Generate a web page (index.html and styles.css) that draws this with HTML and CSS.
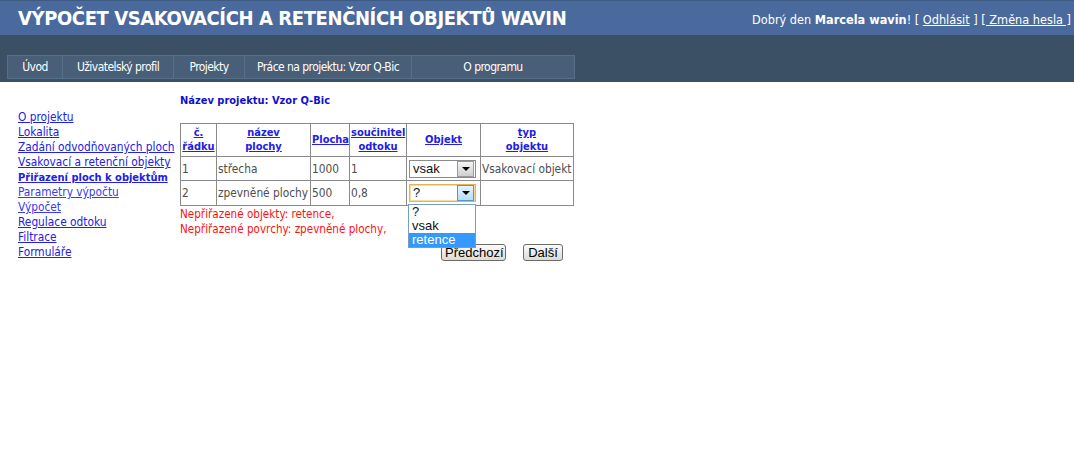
FILE: index.html
```html
<!DOCTYPE html>
<html lang="cs">
<head>
<meta charset="utf-8">
<title>Výpočet vsakovacích a retenčních objektů Wavin</title>
<link rel="stylesheet" href="styles.css">
</head>
<body>
<header class="topbar">
  <h1 class="title">VÝPOČET VSAKOVACÍCH A RETENČNÍCH OBJEKTŮ WAVIN</h1>
  <div class="user">Dobrý den <b>Marcela wavin</b>! [ <a href="#">Odhlásit</a> ] <a href="#">[ Změna hesla ]</a></div>
</header>
<nav class="navbar">
  <ul class="tabs">
    <li class="tab t1">Úvod</li>
    <li class="tab t2">Uživatelský profil</li>
    <li class="tab t3">Projekty</li>
    <li class="tab t4">Práce na projektu: Vzor Q-Bic</li>
    <li class="tab t5">O programu</li>
  </ul>
</nav>
<main class="main">
  <aside class="side">
    <a href="#">O projektu</a>
    <a href="#">Lokalita</a>
    <a href="#">Zadání odvodňovaných ploch</a>
    <a href="#">Vsakovací a retenční objekty</a>
    <a href="#" class="cur">Přiřazení ploch k objektům</a>
    <a href="#" class="vis">Parametry výpočtu</a>
    <a href="#" class="vis">Výpočet</a>
    <a href="#">Regulace odtoku</a>
    <a href="#">Filtrace</a>
    <a href="#">Formuláře</a>
  </aside>
  <section class="content">
    <div class="pname">Název projektu: Vzor Q-Bic</div>
    <table class="grid">
      <colgroup>
        <col class="c1"><col class="c2"><col class="c3"><col class="c4"><col class="c5"><col class="c6">
      </colgroup>
      <tr class="head">
        <th><a href="#">č.<br>řádku</a></th>
        <th><a href="#">název<br>plochy</a></th>
        <th><a href="#">Plocha</a></th>
        <th><a href="#">součinitel<br>odtoku</a></th>
        <th><a href="#">Objekt</a></th>
        <th><a href="#">typ<br>objektu</a></th>
      </tr>
      <tr class="row r1">
        <td>1</td><td>střecha</td><td>1000</td><td>1</td>
        <td class="selcell"><div class="sel"><span class="val">vsak</span><span class="btn"><i class="arr"></i></span></div></td>
        <td>Vsakovací objekt</td>
      </tr>
      <tr class="row r2">
        <td>2</td><td>zpevněné plochy</td><td>500</td><td>0,8</td>
        <td class="selcell"><div class="sel focus"><span class="val">?</span><span class="btn hot"><i class="arr"></i></span>
          <ul class="drop"><li>?</li><li>vsak</li><li class="hl">retence</li></ul></div></td>
        <td></td>
      </tr>
    </table>
    <p class="err">Nepřiřazené objekty: retence,<br>Nepřiřazené povrchy: zpevněné plochy,</p>
    <div class="buttons">
      <button class="b prev">Předchozí</button>
      <button class="b next">Další</button>
    </div>
  </section>
</main>
</body>
</html>
```
FILE: styles.css
```css
html, body { margin: 0; padding: 0; background: #fff; }
body { font-family: "DejaVu Sans Condensed", "DejaVu Sans", sans-serif; font-size: 11.8px; color: #4a4a4a; }

.topbar {
  height: 35px;
  background: #4a6a9d;
  border-top: 1px solid #3d5a80;
  box-sizing: border-box;
  display: flex;
  align-items: center;
  justify-content: space-between;
  padding: 0 3px 0 18px;
}
.title {
  margin: 0;
  font-size: 20px;
  font-weight: bold;
  color: #fff;
  letter-spacing: -0.4px;
}
.user { color: #fff; font-size: 12.6px; padding-top: 2px; }
.user a { color: #fff; }

.navbar {
  height: 47px;
  background: #3b4f65;
  box-sizing: border-box;
  padding: 20px 0 0 7px;
}
.tabs { list-style: none; margin: 0; padding: 0; display: flex; }
.tab {
  flex: none;
  height: 24px;
  box-sizing: border-box;
  background: #495e77;
  border: 1px solid #56708b;
  border-left: none;
  color: #fff;
  font-family: "DejaVu Sans Condensed", sans-serif;
  font-size: 12px;
  letter-spacing: -0.55px;
  display: flex; align-items: center; justify-content: center;
  white-space: nowrap;
  overflow: hidden;
}
.t1 { width: 56px; border-left: 1px solid #56708b; }
.t2 { width: 111px; }
.t3 { width: 71px; }
.t4 { width: 167px; }
.t5 { width: 163px; }

.main { display: flex; padding-top: 11px; }
.side { width: 162px; padding: 17px 0 0 18px; display: flex; flex-direction: column; }
.side a { color: #2020e8; line-height: 15px; white-space: nowrap; }
.side a.vis { color: #3a3af0; }
.side a.cur { font-weight: bold; font-size: 11px; }

.content { padding: 0; }
.pname { color: #1010cc; font-weight: bold; font-size: 11px; line-height: 15px; height: 30px; }

.grid { border-collapse: collapse; border: 1px solid #8a8a8a; table-layout: fixed; width: 393px; }
.grid th, .grid td { border: 1px solid #8a8a8a; padding: 0 1px; }
.grid th { font-weight: bold; font-size: 11px; text-align: center; height: 32px; line-height: 14px; }
.grid th a { color: #2020e8; }
.grid td { text-align: left; color: #4d4d4d; white-space: nowrap; overflow: visible; }
.r1 td { height: 23px; }
.r2 td { height: 24px; }
.c1 { width: 36px; }
.c2 { width: 94px; }
.c3 { width: 39px; }
.c4 { width: 57px; }
.c5 { width: 74px; }
.c6 { width: 93px; }

.selcell { position: relative; padding: 0 2px !important; }
.sel {
  position: relative;
  width: 67px; height: 18px; box-sizing: border-box;
  border: 1px solid #8c8c8c;
  background: #fff;
  display: flex; align-items: center;
  font-family: "Liberation Sans", sans-serif; font-size: 13px; color: #111;
}
.sel.focus { border: 1px solid #e2b45a; box-shadow: inset 0 0 0 1px #f4d9a0; }
.val { flex: 1; padding-left: 3px; line-height: 16px; }
.btn {
  width: 15px; height: 14px; margin-right: 1px;
  border: 1px solid #9a9a9a;
  background: linear-gradient(#f4f4f4, #cfcfcf);
  display: flex; align-items: center; justify-content: center;
}
.btn.hot { background: linear-gradient(#e6f4fd, #b7dcf5); border-color: #5d95c2; }
.arr { width: 0; height: 0; border-left: 4px solid transparent; border-right: 4px solid transparent; border-top: 4px solid #000; }

.drop {
  position: absolute; left: -2px; top: 19px;
  width: 68px; box-sizing: border-box;
  margin: 0; padding: 0; list-style: none;
  background: #fff; border: 1px solid #7a9cc4;
  z-index: 5;
}
.drop li { height: 14px; line-height: 14px; padding-left: 3px; font-size: 13px; color: #111; }
.drop li.hl { background: #3399ff; color: #fff; }

.err { color: #ff1010; margin: 1px 0 0; line-height: 15px; font-size: 11.6px; }
.buttons { display: flex; padding: 7px 0 0 261px; gap: 17px; }
.b {
  font-family: "Liberation Sans", sans-serif; font-size: 13px; color: #000;
  height: 17px; padding: 0 3px; line-height: 14px;
  border: 1px solid #6b6b6b; border-radius: 3px;
  background: linear-gradient(#fbfbfb, #dcdcd4);
}
.prev { width: 65px; }
.next { width: 40px; }
```
